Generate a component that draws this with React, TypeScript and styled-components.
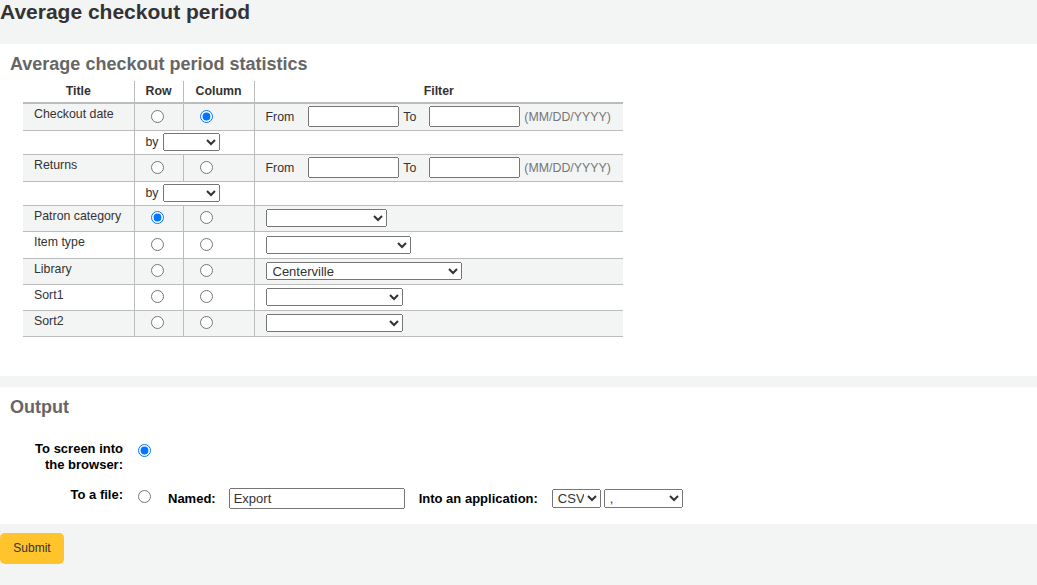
import React from 'react';
import styled, { createGlobalStyle } from 'styled-components';

const GlobalStyle = createGlobalStyle`
  html, body { margin: 0; padding: 0; background: #f3f4f4; }
  body {
    font-family: "Liberation Sans", Arial, sans-serif;
    font-size: 13px;
    color: #333;
  }
`;

const Page = styled.div`
  display: flex;
  flex-direction: column;
  min-height: 585px;
`;

const PageTitle = styled.h1`
  margin: 0 0 20px;
  font-size: 21px;
  font-weight: bold;
  line-height: 24px;
  color: #333;
`;

const Panel = styled.section<{ $pb: number; $mt?: number }>`
  background: #fff;
  padding: 10px 0 ${(p) => p.$pb}px;
  margin-top: ${(p) => p.$mt ?? 0}px;
`;

const PanelTitle = styled.h2`
  margin: 0 0 0 10px;
  font-size: 18px;
  font-weight: bold;
  color: #666;
  line-height: normal;
`;

const StatsTable = styled.table`
  margin: 6px 0 0 23px;
  border-collapse: collapse;
  table-layout: fixed;
  width: 600px;
  font-size: 12.35px;
  color: #333;
`;

const Col = styled.col<{ $w: number }>`
  width: ${(p) => p.$w}px;
`;

const HeadCell = styled.th<{ $divider?: boolean }>`
  padding: 3px 11px 4px;
  font-weight: bold;
  text-align: center;
  border-bottom: 2px solid #bcbcbc;
  border-right: ${(p) => (p.$divider ? '1px solid #bcbcbc' : 'none')};
`;

const BodyRow = styled.tr<{ $stripe?: boolean; $h: number }>`
  background: ${(p) => (p.$stripe ? '#f3f4f4' : '#fff')};
  height: ${(p) => p.$h}px;
`;

const Cell = styled.td<{ $divider?: boolean; $top?: boolean }>`
  padding: ${(p) => (p.$top ? '3px' : '2px')} 11px 2px;
  border-bottom: 1px solid #bcbcbc;
  border-right: ${(p) => (p.$divider ? '1px solid #bcbcbc' : 'none')};
  vertical-align: ${(p) => (p.$top ? 'top' : 'middle')};
  white-space: nowrap;
  text-align: left;
`;

const ByCell = styled(Cell)`
  line-height: 18px;
`;

const Radio = styled.input.attrs({ type: 'radio' })`
  margin: 0 3px 1px 5px;
  width: 13px;
  height: 13px;
  vertical-align: middle;
`;

const FilterLine = styled.div`
  display: flex;
  align-items: center;
  gap: 4px;
`;

const FilterLabel = styled.span<{ $mr: number }>`
  margin-right: ${(p) => p.$mr}px;
`;

const DateInput = styled.input.attrs({ type: 'text' })`
  box-sizing: border-box;
  width: 91px;
  height: 21px;
  margin: 0;
  font: 13px "Liberation Sans", Arial, sans-serif;
`;

const Hint = styled.span`
  color: #777;
`;

const Select = styled.select<{ $w: number; $h?: number }>`
  box-sizing: border-box;
  width: ${(p) => p.$w}px;
  height: ${(p) => p.$h ?? 18}px;
  margin: 0;
  padding: 0 2px;
  font: 13px "Liberation Sans", Arial, sans-serif;
  color: #333;
  vertical-align: middle;
`;

const ByText = styled.span`
  margin-right: 4px;
  vertical-align: middle;
`;

const OutputList = styled.div`
  display: flex;
  flex-direction: column;
  gap: 14px;
  margin-top: 23px;
`;

const OutRow = styled.div`
  display: flex;
  align-items: flex-start;
`;

const OutLabel = styled.label`
  box-sizing: border-box;
  width: 100px;
  margin: 0 15px 0 23px;
  text-align: right;
  font-weight: bold;
  line-height: 16px;
  color: #000;
`;

const OutRadio = styled.input.attrs({ type: 'radio' })`
  margin: 3px 0 0;
  width: 13px;
  height: 13px;
  flex: none;
`;

const FileOptions = styled.div`
  display: flex;
  align-items: baseline;
  margin-top: 1px;
`;

const InlineLabel = styled.span<{ $ml: number }>`
  margin-left: ${(p) => p.$ml}px;
  font-weight: bold;
  color: #000;
`;

const NameInput = styled.input.attrs({ type: 'text' })<{ $ml: number }>`
  box-sizing: border-box;
  width: 176px;
  height: 21px;
  margin: 0 0 0 ${(p) => p.$ml}px;
  padding: 1px 3px;
  font: 13px "Liberation Sans", Arial, sans-serif;
  color: #333;
`;

const AppSelect = styled.select<{ $w: number; $ml: number }>`
  box-sizing: border-box;
  width: ${(p) => p.$w}px;
  height: 19px;
  margin: 0 0 0 ${(p) => p.$ml}px;
  padding: 0 0 0 1px;
  font: 13px "Liberation Sans", Arial, sans-serif;
  color: #333;
`;

const SubmitButton = styled.button`
  align-self: flex-start;
  margin-top: 9px;
  width: 64px;
  height: 31px;
  border: none;
  border-radius: 5px;
  background: #ffc32b;
  color: #333;
  font: 12px "Liberation Sans", Arial, sans-serif;
  padding: 0;
  cursor: pointer;
`;

type Row =
  | { kind: 'date'; title: string; row: boolean; col: boolean; h: number }
  | { kind: 'by'; h: number }
  | { kind: 'select'; title: string; row: boolean; col: boolean; w: number; value?: string; h: number };

const rows: Row[] = [
  { kind: 'date', title: 'Checkout date', row: false, col: true, h: 27 },
  { kind: 'by', h: 24 },
  { kind: 'date', title: 'Returns', row: false, col: false, h: 27 },
  { kind: 'by', h: 24 },
  { kind: 'select', title: 'Patron category', row: true, col: false, w: 121, h: 26 },
  { kind: 'select', title: 'Item type', row: false, col: false, w: 145, h: 27 },
  { kind: 'select', title: 'Library', row: false, col: false, w: 196, value: 'Centerville', h: 26 },
  { kind: 'select', title: 'Sort1', row: false, col: false, w: 137, h: 26 },
  { kind: 'select', title: 'Sort2', row: false, col: false, w: 137, h: 26 },
];

export default function App() {
  return (
    <Page>
      <GlobalStyle />
      <PageTitle>Average checkout period</PageTitle>

      <Panel $pb={39}>
        <PanelTitle>Average checkout period statistics</PanelTitle>
        <StatsTable>
          <colgroup>
            <Col $w={111} />
            <Col $w={49} />
            <Col $w={71} />
            <Col $w={369} />
          </colgroup>
          <thead>
            <tr>
              <HeadCell $divider>Title</HeadCell>
              <HeadCell $divider>Row</HeadCell>
              <HeadCell $divider>Column</HeadCell>
              <HeadCell>Filter</HeadCell>
            </tr>
          </thead>
          <tbody>
            {rows.map((r, i) => {
              const stripe = i % 2 === 0;
              if (r.kind === 'by') {
                return (
                  <BodyRow key={i} $stripe={stripe} $h={r.h}>
                    <Cell $divider />
                    <ByCell $divider colSpan={2}>
                      <ByText>by</ByText>
                      <Select $w={57} defaultValue="">
                        <option value=""></option>
                      </Select>
                    </ByCell>
                    <Cell />
                  </BodyRow>
                );
              }
              return (
                <BodyRow key={i} $stripe={stripe} $h={r.h}>
                  <Cell $divider $top>{r.title}</Cell>
                  <Cell $divider>
                    <Radio name={`row-${i}`} defaultChecked={r.row} readOnly />
                  </Cell>
                  <Cell $divider>
                    <Radio name={`col-${i}`} defaultChecked={r.col} readOnly />
                  </Cell>
                  <Cell>
                    {r.kind === 'date' ? (
                      <FilterLine>
                        <FilterLabel $mr={10}>From</FilterLabel>
                        <DateInput />
                        <FilterLabel $mr={9}>To</FilterLabel>
                        <DateInput />
                        <Hint>(MM/DD/YYYY)</Hint>
                      </FilterLine>
                    ) : (
                      <Select $w={r.w} defaultValue={r.value ?? ''}>
                        <option value={r.value ?? ''}>{r.value ?? ''}</option>
                      </Select>
                    )}
                  </Cell>
                </BodyRow>
              );
            })}
          </tbody>
        </StatsTable>
      </Panel>

      <Panel $pb={15} $mt={11}>
        <PanelTitle>Output</PanelTitle>
        <OutputList>
          <OutRow>
            <OutLabel>To screen into the browser:</OutLabel>
            <OutRadio name="output" defaultChecked />
          </OutRow>
          <OutRow>
            <OutLabel>To a file:</OutLabel>
            <OutRadio name="output" />
            <FileOptions>
              <InlineLabel $ml={17}>Named:</InlineLabel>
              <NameInput $ml={13} defaultValue="Export" />
              <InlineLabel $ml={14}>Into an application:</InlineLabel>
              <AppSelect $w={49} $ml={14} defaultValue="CSV">
                <option value="CSV">CSV</option>
              </AppSelect>
              <AppSelect $w={79} $ml={3} defaultValue=",">
                <option value=",">,</option>
              </AppSelect>
            </FileOptions>
          </OutRow>
        </OutputList>
      </Panel>

      <SubmitButton type="button">Submit</SubmitButton>
    </Page>
  );
}
